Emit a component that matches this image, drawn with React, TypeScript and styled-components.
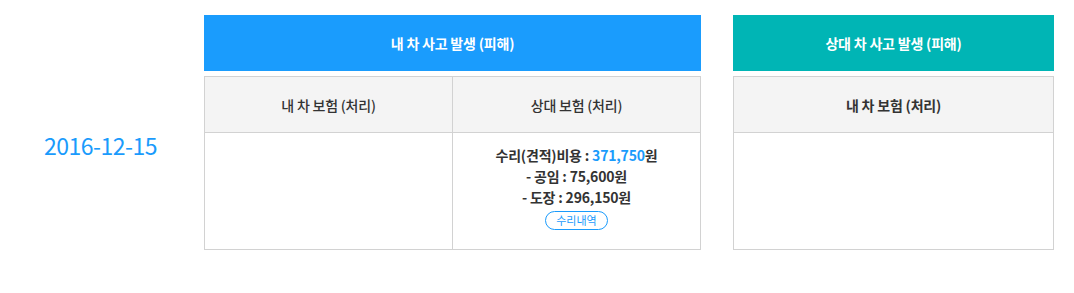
import React from "react";
import styled, { createGlobalStyle } from "styled-components";

const Global = createGlobalStyle`
  html, body { margin: 0; padding: 0; background: #fff; }
  body { font-family: "Noto Sans CJK KR", "Noto Sans", sans-serif; color: #333; }
`;

const Page = styled.div`
  display: flex;
  align-items: flex-start;
  padding-top: 15px;
  width: 1074px;
  height: 293px;
  box-sizing: border-box;
`;

const DateCol = styled.div`
  width: 204px;
  flex: none;
  box-sizing: border-box;
  padding-top: 114px;
  padding-right: 3px;
  text-align: center;
  font-size: 23px;
  line-height: 32px;
  color: #1a9bfc;
  letter-spacing: -0.5px;
`;

const Section = styled.div<{ $w: number; $ml?: number }>`
  width: ${(p) => p.$w}px;
  margin-left: ${(p) => p.$ml ?? 0}px;
  flex: none;
  display: flex;
  flex-direction: column;
  gap: 5px;
`;

const Banner = styled.div<{ $bg: string }>`
  height: 56px;
  background: ${(p) => p.$bg};
  color: #fff;
  font-size: 14px;
  font-weight: 700;
  display: flex;
  align-items: center;
  justify-content: center;
  letter-spacing: -0.2px;
`;

const Grid = styled.div<{ $cols: number }>`
  display: grid;
  grid-template-columns: repeat(${(p) => p.$cols}, 1fr);
  border: 1px solid #d2d2d2;
  border-right: none;
  border-bottom: none;
`;

const HeadCell = styled.div<{ $bold?: boolean }>`
  height: 55px;
  background: #f4f4f4;
  border-right: 1px solid #d2d2d2;
  border-bottom: 1px solid #d2d2d2;
  display: flex;
  align-items: center;
  justify-content: center;
  font-size: 14px;
  font-weight: ${(p) => (p.$bold ? 700 : 500)};
  color: #333;
  letter-spacing: -0.2px;
`;

const BodyCell = styled.div`
  height: 117px;
  box-sizing: border-box;
  border-right: 1px solid #d2d2d2;
  border-bottom: 1px solid #d2d2d2;
  padding-top: 12px;
  display: flex;
  flex-direction: column;
  align-items: center;
`;

const Line = styled.div`
  font-size: 14px;
  line-height: 21px;
  font-weight: 700;
  color: #333;
  letter-spacing: -0.2px;
`;

const Amount = styled.span`
  color: #1a9bfc;
`;

const Pill = styled.button`
  margin-top: 3px;
  height: 19px;
  padding: 0 10px;
  border: 1px solid #1a9bfc;
  border-radius: 10px;
  background: #fff;
  color: #1a9bfc;
  font-family: inherit;
  font-size: 11px;
  line-height: 17px;
  cursor: pointer;
`;

export default function App() {
  return (
    <>
      <Global />
      <Page>
        <DateCol>2016-12-15</DateCol>
        <Section $w={497}>
          <Banner $bg="#1a9cfd">내 차 사고 발생 (피해)</Banner>
          <Grid $cols={2}>
            <HeadCell>내 차 보험 (처리)</HeadCell>
            <HeadCell>상대 보험 (처리)</HeadCell>
            <BodyCell />
            <BodyCell>
              <Line>
                수리(견적)비용 : <Amount>371,750</Amount>원
              </Line>
              <Line>- 공임 : 75,600원</Line>
              <Line>- 도장 : 296,150원</Line>
              <Pill>수리내역</Pill>
            </BodyCell>
          </Grid>
        </Section>
        <Section $w={321} $ml={32}>
          <Banner $bg="#00b5b5">상대 차 사고 발생 (피해)</Banner>
          <Grid $cols={1}>
            <HeadCell $bold>내 차 보험 (처리)</HeadCell>
            <BodyCell />
          </Grid>
        </Section>
      </Page>
    </>
  );
}
